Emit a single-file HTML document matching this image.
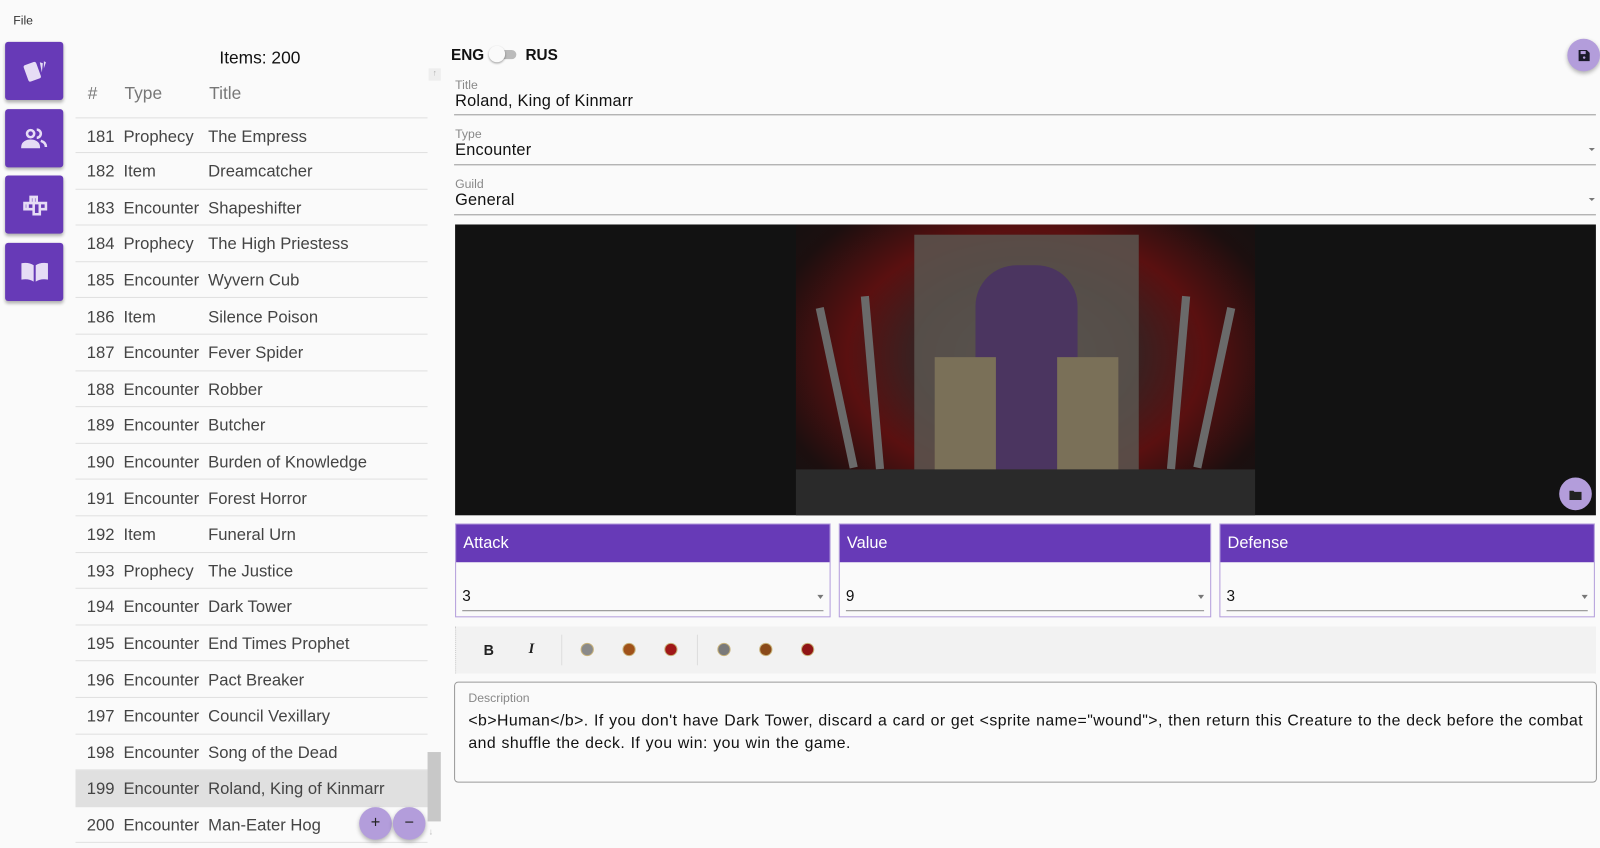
<!DOCTYPE html>
<html><head><style>
*{box-sizing:border-box;margin:0;padding:0}
body{width:1600px;height:848px;background:#fafafa;font-family:"Liberation Sans",sans-serif;color:#333;overflow:hidden}
#w{position:absolute;left:0;top:0;width:1568px;height:831px;transform:scale(1.0204);transform-origin:0 0}
.a{position:absolute}
.nav{position:absolute;left:5px;width:57px;height:57px;background:#673ab7;border-radius:3px;box-shadow:0 2px 3px rgba(0,0,0,.3);display:flex;align-items:center;justify-content:center}
.row{position:absolute;left:74px;width:345px;height:35.6px;border-bottom:1px solid #e0e0e0;font-size:16.3px;color:#444;line-height:36px}
.row span{position:absolute}
.lbl{font-size:12px;color:#888}
.val{font-size:16px;color:#111;letter-spacing:.2px}
.line{position:absolute;height:1px;background:#999}
.stat{position:absolute;top:513px;height:92px;border:1px solid #b39ddb;background:#fafafa}
.stat .h{height:37px;background:#673ab7;color:#fff;font-size:16px;line-height:37px;padding-left:7px}
.stat .v{position:absolute;left:6px;right:6px;top:62px;font-size:15px;color:#111;border-bottom:1px solid #888;height:23px}
.stat .v:after{content:"";position:absolute;right:0;top:7px;border:3px solid transparent;border-top:4px solid #777}
.gem{position:absolute;top:630px;width:13px;height:13px;border-radius:50%;border:1px solid #c8b27a}
.fab{position:absolute;width:32px;height:32px;border-radius:50%;background:#b39ddb;box-shadow:0 2px 4px rgba(0,0,0,.3);display:flex;align-items:center;justify-content:center;font-size:16px;color:#222}
</style></head><body><div id="w">
<div class="a" style="left:13px;top:13px;font-size:12px">File</div>
<div class="nav" style="top:41px"><svg width="30" height="30" viewBox="0 0 30 30"><rect x="6" y="7" width="13" height="17" rx="2" transform="rotate(-20 12 15)" fill="#e6dcf5"/><path d="M20 6l3 1-1 9z M24 5l2 1-2 6z" fill="#e6dcf5"/></svg></div>
<div class="nav" style="top:107px"><svg width="30" height="30" viewBox="0 0 30 30" fill="none" stroke="#e6dcf5" stroke-width="2.5"><circle cx="11" cy="10" r="3.5"/><path d="M3 23c0-4 4-6 8-6s8 2 8 6z" fill="#e6dcf5"/><path d="M17 6a4 4 0 010 8M21 17c3 1 5 3 5 6"/></svg></div>
<div class="nav" style="top:172px"><svg width="32" height="30" viewBox="0 0 32 30" fill="none" stroke="#e6dcf5" stroke-width="2.5"><path d="M12 7h6v6h9v6h-6v5h-6v-5h-9v-6h6z M12 13h6 M15 7v6 M9 13v6 M15 13v6 M21 13v6"/></svg></div>
<div class="nav" style="top:238px"><svg width="32" height="30" viewBox="0 0 32 30"><path d="M3 6c5-1 9 0 12 2v16c-3-2-7-3-12-2z M17 8c3-2 7-3 12-2v16c-5-1-9 0-12 2z" fill="#e6dcf5"/></svg></div>

<div class="a" style="left:215px;top:47px;font-size:17px;color:#111">Items: 200</div>
<div class="a" style="left:420px;top:67px;width:12px;height:12px;background:#eee;font-size:8px;color:#aaa;text-align:center">↑</div>
<div class="row" style="top:74px;font-size:17px;color:#777;border:none"><span style="left:12px">#</span><span style="left:48px">Type</span><span style="left:131px">Title</span></div>
<div id="rows"></div>
<div class="a" style="left:419px;top:737px;width:13px;height:68px;background:#c8c8c8"></div>
<div class="a" style="left:420px;top:810px;font-size:9px;color:#bbb">↓</div>
<div class="fab" style="left:352px;top:791px">+</div>
<div class="fab" style="left:385px;top:791px">−</div>

<div class="a" style="left:442px;top:46px;font-size:15px;font-weight:bold;color:#111">ENG</div>
<div class="a" style="left:482px;top:49px;width:24px;height:9px;border-radius:5px;background:#bbb"></div>
<div class="a" style="left:479px;top:45px;width:16px;height:16px;border-radius:50%;background:#fafafa;box-shadow:0 1px 2px rgba(0,0,0,.4)"></div>
<div class="a" style="left:515px;top:46px;font-size:15px;font-weight:bold;color:#111">RUS</div>
<div class="fab" style="left:1536px;top:38px"><svg width="11" height="11" viewBox="0 0 11 11"><path d="M0 0h8l3 3v8h-11z" fill="#1a1a2a"/><rect x="2" y="1" width="5" height="3" fill="#b39ddb"/><circle cx="5.5" cy="7.5" r="1.2" fill="#b39ddb"/></svg></div>

<div class="a lbl" style="left:446px;top:76px">Title</div>
<div class="a val" style="left:446px;top:91px">Roland, King of Kinmarr</div>
<div class="line" style="left:445px;top:112px;width:1119px"></div>
<div class="a lbl" style="left:446px;top:124px">Type</div>
<div class="a val" style="left:446px;top:139px">Encounter</div>
<div class="line" style="left:445px;top:161px;width:1119px"></div>
<div class="a" style="left:1557px;top:145px;border:3px solid transparent;border-top:3px solid #777"></div>
<div class="a lbl" style="left:446px;top:173px">Guild</div>
<div class="a val" style="left:446px;top:188px">General</div>
<div class="line" style="left:445px;top:210px;width:1119px"></div>
<div class="a" style="left:1557px;top:194px;border:3px solid transparent;border-top:3px solid #777"></div>

<div class="a" style="left:446px;top:220px;width:1118px;height:285px;background:#121212;overflow:hidden">
 <div class="a" style="left:334px;top:0;width:450px;height:285px;background:radial-gradient(ellipse at 50% 45%,#4a4444 0%,#3a2020 35%,#5a1010 55%,#1c0f0f 80%,#121212 100%)"></div>
 <div class="a" style="left:450px;top:10px;width:220px;height:250px;background:#5a5650;opacity:.85"></div>
 <div class="a" style="left:510px;top:40px;width:100px;height:200px;background:#4b3560;border-radius:40px 40px 10px 10px"></div>
 <div class="a" style="left:470px;top:130px;width:60px;height:130px;background:#7a7058"></div>
 <div class="a" style="left:590px;top:130px;width:60px;height:130px;background:#7a7058"></div>
 <div class="a" style="left:370px;top:80px;width:8px;height:160px;background:#6a6a6a;transform:rotate(-12deg)"></div>
 <div class="a" style="left:405px;top:70px;width:8px;height:170px;background:#6a6a6a;transform:rotate(-5deg)"></div>
 <div class="a" style="left:705px;top:70px;width:8px;height:170px;background:#6a6a6a;transform:rotate(5deg)"></div>
 <div class="a" style="left:740px;top:80px;width:8px;height:160px;background:#6a6a6a;transform:rotate(12deg)"></div>
 <div class="a" style="left:334px;top:240px;width:450px;height:45px;background:#2a2a2a"></div>
 <div class="a" style="left:1082px;top:248px;width:32px;height:32px;border-radius:50%;background:#b39ddb"></div>
</div>
<svg class="a" style="left:1538px;top:480px" width="12" height="10" viewBox="0 0 12 10"><path d="M0 1h4l1 1h7v8h-12z" fill="#222"/></svg>

<div class="stat" style="left:446px;width:368px"><div class="h">Attack</div><div class="v">3</div></div>
<div class="stat" style="left:822px;width:365px"><div class="h">Value</div><div class="v">9</div></div>
<div class="stat" style="left:1195px;width:368px"><div class="h">Defense</div><div class="v">3</div></div>

<div class="a" style="left:446px;top:614px;width:1118px;height:46px;background:#f2f2f2;border-left:1px dotted #ccc"></div>
<div class="a" style="left:474px;top:629px;font-size:14px;font-weight:bold;color:#222">B</div>
<div class="a" style="left:518px;top:629px;font-size:14px;font-weight:bold;font-style:italic;color:#222;font-family:'Liberation Serif',serif">I</div>
<div class="a" style="left:550px;top:622px;width:1px;height:30px;background:#ddd"></div>
<div class="a" style="left:683px;top:622px;width:1px;height:30px;background:#ddd"></div>
<div class="gem" style="left:569px;background:#8a8a8a"></div>
<div class="gem" style="left:610px;background:#a0521a"></div>
<div class="gem" style="left:651px;background:#a01818"></div>
<div class="gem" style="left:703px;background:#7a7a7a"></div>
<div class="gem" style="left:744px;background:#8a4a1a"></div>
<div class="gem" style="left:785px;background:#901515"></div>

<div class="a" style="left:445px;top:668px;width:1120px;height:99px;border:1px solid #999;border-radius:4px"></div>
<div class="a lbl" style="left:459px;top:677px">Description</div>
<div class="a" style="left:459px;top:696px;width:1100px;font-size:15.5px;line-height:22px;color:#111;letter-spacing:.45px;word-spacing:.5px">&lt;b&gt;Human&lt;/b&gt;. If you don't have Dark Tower, discard a card or get &lt;sprite name="wound"&gt;, then return this Creature to the deck before the combat and shuffle the deck. If you win: you win the game.</div>
</div>
<script>
var d=[["181","Prophecy","The Empress"],["182","Item","Dreamcatcher"],["183","Encounter","Shapeshifter"],["184","Prophecy","The High Priestess"],["185","Encounter","Wyvern Cub"],["186","Item","Silence Poison"],["187","Encounter","Fever Spider"],["188","Encounter","Robber"],["189","Encounter","Butcher"],["190","Encounter","Burden of Knowledge"],["191","Encounter","Forest Horror"],["192","Item","Funeral Urn"],["193","Prophecy","The Justice"],["194","Encounter","Dark Tower"],["195","Encounter","End Times Prophet"],["196","Encounter","Pact Breaker"],["197","Encounter","Council Vexillary"],["198","Encounter","Song of the Dead"],["199","Encounter","Roland, King of Kinmarr"],["200","Encounter","Man-Eater Hog"]];
var h="";d.forEach(function(r,i){var t=114.5+i*35.6;h+='<div class="row" style="top:'+t+'px;'+(i==18?'background:#e0e0e0;':'')+(i==0?'border-top:1px solid #e0e0e0;':'')+'"><span style="left:11px">'+r[0]+'</span><span style="left:47px">'+r[1]+'</span><span style="left:130px">'+r[2]+'</span></div>';});
document.getElementById("rows").innerHTML=h;
</script>
</body></html>
